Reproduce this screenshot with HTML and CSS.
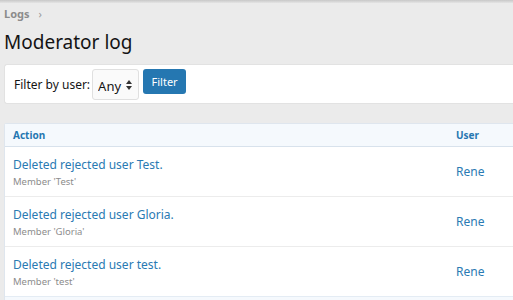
FILE: index.html
```html
<!DOCTYPE html>
<html lang="en">
<head>
  <meta charset="UTF-8" />
  <title>Moderator log</title>
  <link rel="stylesheet" href="styles.css">
</head>
<body>
  <div class="topShadow"></div>

  <div class="page">
    <div class="breadcrumb">
      <a href="#">Logs</a>
      <span class="sep">&rsaquo;</span>
    </div>

    <h1>Moderator log</h1>

    <!-- Filtro -->
    <form class="filterBar">
      <label for="user">Filter by user:</label>
      <div class="selectWrap">
        <select id="user">
          <option>Any</option>
        </select>
        <svg class="arrows" width="6" height="10" viewBox="0 0 6 10">
          <path d="M3 0 L6 4 H0 Z M3 10 L6 6 H0 Z" fill="#333"/>
        </svg>
      </div>
      <button type="button">Filter</button>
    </form>

    <!-- Tabella -->
    <div class="block">
      <div class="row head">
        <div class="cellMain">Action</div>
        <div class="cellUser">User</div>
      </div>

      <div class="row">
        <div class="cellMain">
          <a href="#">Deleted rejected user Test.</a>
          <div class="hint">Member 'Test'</div>
        </div>
        <div class="cellUser"><a href="#">Rene</a></div>
      </div>

      <div class="row">
        <div class="cellMain">
          <a href="#">Deleted rejected user Gloria.</a>
          <div class="hint">Member 'Gloria'</div>
        </div>
        <div class="cellUser"><a href="#">Rene</a></div>
      </div>

      <div class="row">
        <div class="cellMain">
          <a href="#">Deleted rejected user test.</a>
          <div class="hint">Member 'test'</div>
        </div>
        <div class="cellUser"><a href="#">Rene</a></div>
      </div>

      <div class="row foot"></div>
    </div>
  </div>
</body>
</html>
```

FILE: styles.css
```css
* {
  box-sizing: border-box;
}

body {
  font-family: 'Noto Sans', 'Open Sans', sans-serif;
  background-color: #ebebeb;
  margin: 0;
  color: #141414;
  overflow: hidden;
}

a {
  text-decoration: none;
  color: #2a7ab3;
}

.topShadow {
  height: 3px;
  background: linear-gradient(#c8c8c8, #e4e4e4);
}

.page {
  padding: 0 0 0 4px;
}

.breadcrumb {
  font-size: 11px;
  font-weight: 700;
  padding-top: 3px;
  height: 20px;
  line-height: 16px;
}

.breadcrumb a {
  color: #8c8c8c;
}

.breadcrumb .sep {
  color: #9a9a9a;
  margin-left: 6px;
  font-weight: 400;
}

h1 {
  font-size: 19px;
  font-weight: 400;
  margin: 5px 0 0;
  line-height: 28px;
  color: #141414;
}

.filterBar {
  display: flex;
  align-items: center;
  gap: 2px;
  margin-top: 8px;
  height: 40px;
  padding-left: 9px;
  background: #fff;
  border: 1px solid #e2e2e2;
  border-right: none;
  border-radius: 3px 0 0 3px;
  font-size: 12px;
}

.selectWrap {
  position: relative;
}

select {
  appearance: none;
  font-family: inherit;
  font-size: 13px;
  width: 47px;
  height: 31px;
  padding: 4px 0 0 5px;
  border: 1px solid #e0e0e0;
  border-radius: 3px;
  background: #fafafa;
  color: #141414;
}

.arrows {
  position: absolute;
  right: 7px;
  top: 11px;
  pointer-events: none;
}

button {
  font-family: inherit;
  font-size: 11px;
  height: 25px;
  width: 43px;
  padding: 0;
  margin-left: 2px;
  margin-top: -6px;
  background-color: #2577b1;
  color: #fff;
  border: none;
  border-radius: 3px;
  cursor: pointer;
}

.block {
  margin-top: 19px;
  background: #fff;
  border: 1px solid #dfe6ee;
  border-right: none;
  border-radius: 3px 0 0 0;
}

.row {
  display: flex;
  align-items: center;
  height: 50px;
  border-top: 1px solid #ececec;
  font-size: 12px;
}

.row.head {
  height: 23px;
  border-top: none;
  border-bottom: 1px solid #d8e2ec;
  background: #f5f9fd;
  font-size: 10px;
  font-weight: 700;
  color: #2577b1;
}

.row.head + .row {
  border-top: none;
  height: 49px;
}

.row.foot {
  height: 10px;
  background: #f5f9fd;
  border-top-color: #e4ecf4;
}

.cellMain {
  flex: 1;
  padding-left: 8px;
}

.cellUser {
  width: 57px;
}

.hint {
  font-size: 9.5px;
  color: #8c8c8c;
  margin-top: 2px;
}
```
